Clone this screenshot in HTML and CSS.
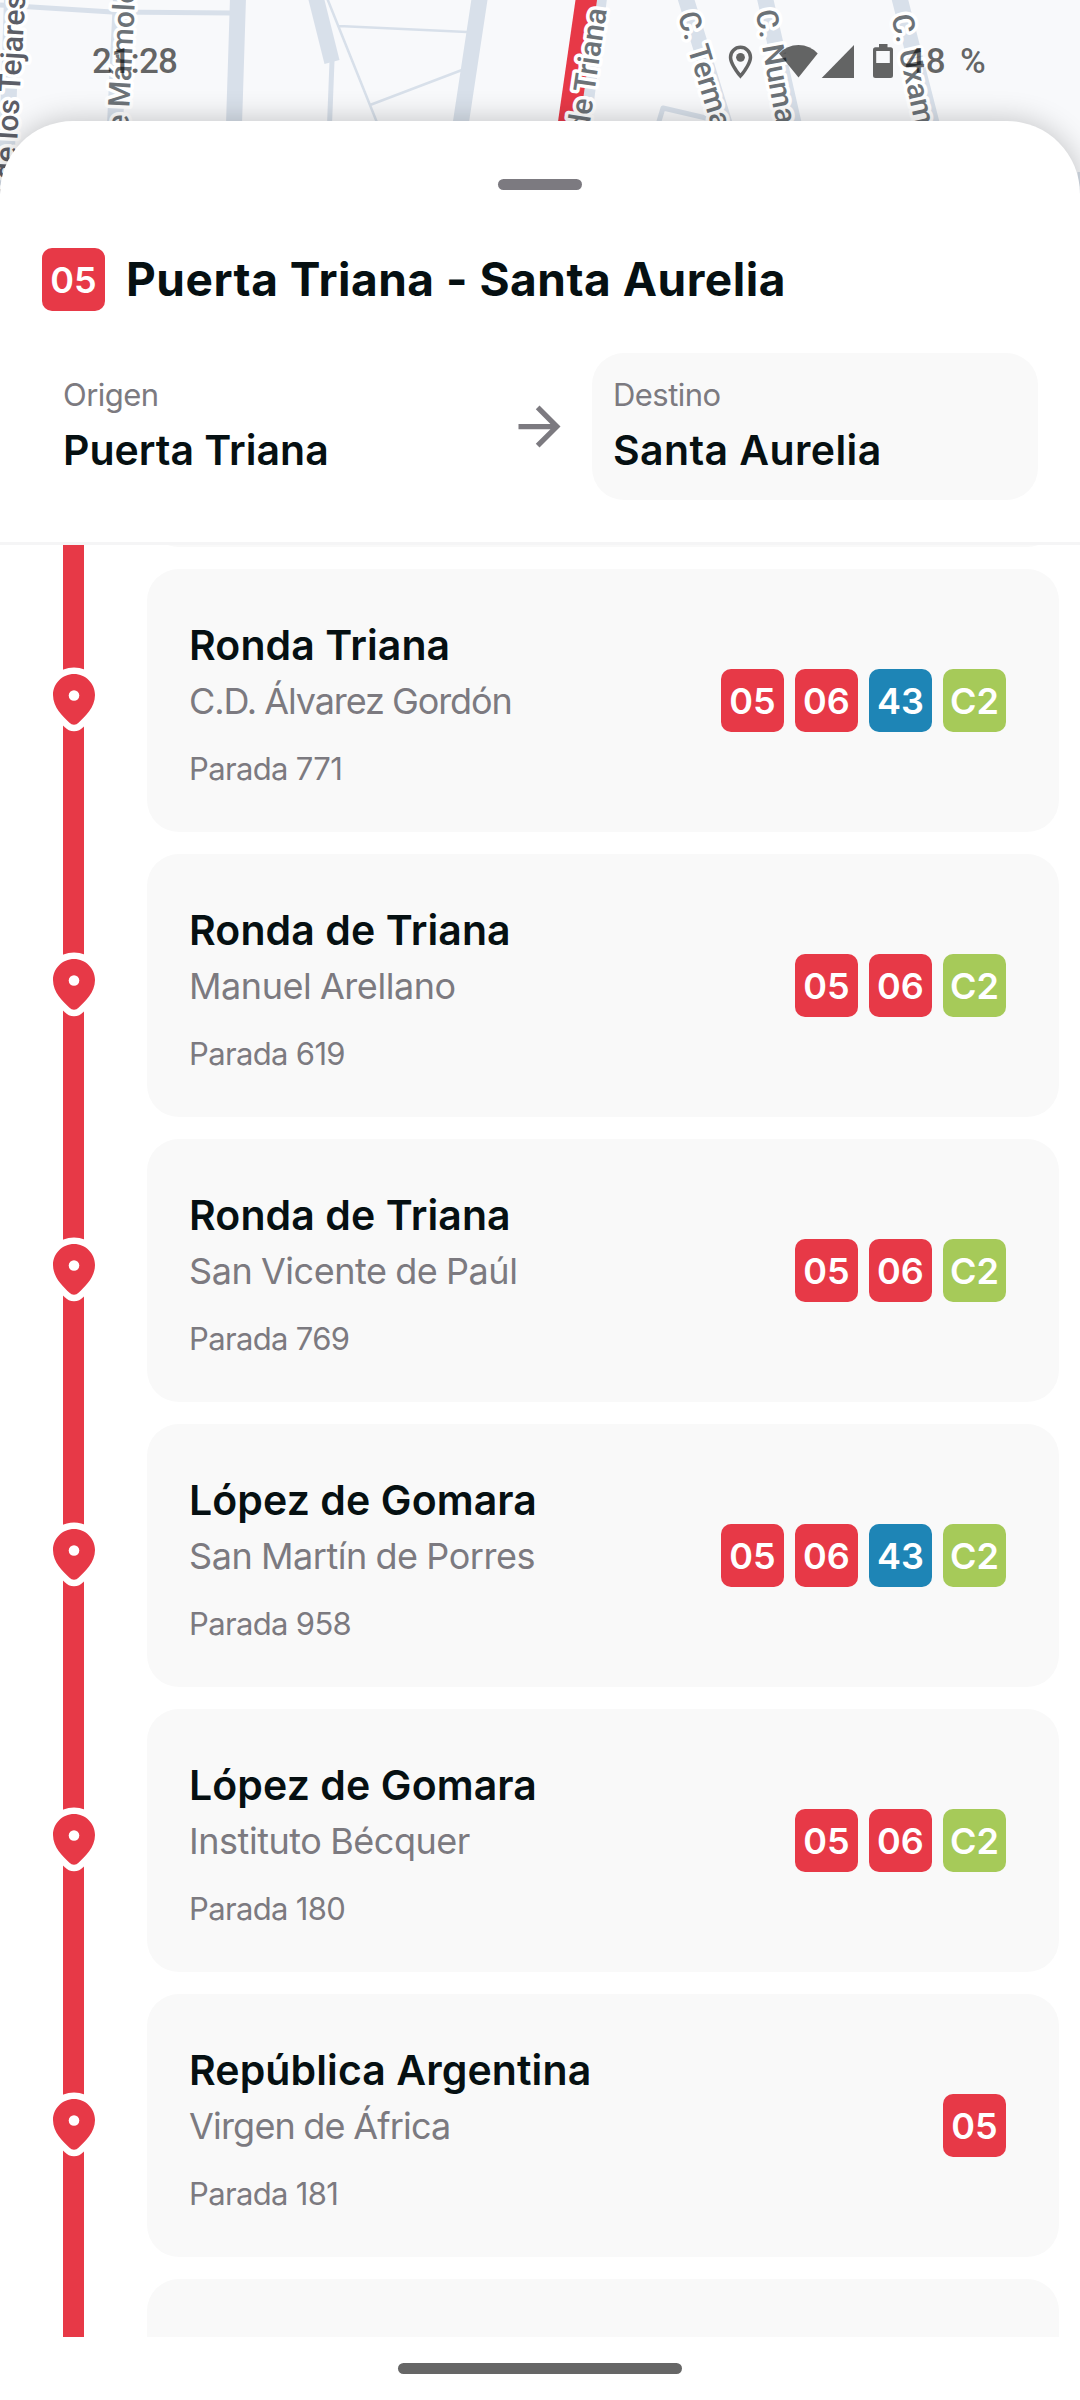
FILE: index.html
```html
<!DOCTYPE html>
<html lang="es">
<head>
<meta charset="utf-8">
<title>Línea 05</title>
<link rel="stylesheet" href="styles.css">
</head>
<body>
<svg width="0" height="0" class="defs">
  <symbol id="pin" viewBox="-30 -30 60 68">
    <path class="pin-halo" d="M0-21C-11.6-21-21-11.6-21 0C-21 12.5-11 21.500-4.500 27.800A6 6 0 0 0 4.500 27.800C11 21.500 21 12.500 21 0C21-11.600 11.600-21 0-21Z"/>
    <path class="pin-body" d="M0-21C-11.6-21-21-11.6-21 0C-21 12.5-11 21.500-4.500 27.800A6 6 0 0 0 4.500 27.800C11 21.500 21 12.500 21 0C21-11.600 11.600-21 0-21Z"/>
    <circle class="pin-dot" cx="0" cy="0.500" r="5.300"/>
  </symbol>
</svg>
<div class="screen">
  <svg class="map" viewBox="0 0 1080 210" width="1080" height="210">
    <g class="roads">
      <path stroke-width="5" d="M0 5L112 12L232 13"/>
      <path stroke-width="16" d="M238 -2L234 125"/>
      <path stroke-width="16" d="M121 -2L115 125M12 -2L5 210M479.700 -2L460.500 125M599 -2L583 125"/>
      <path stroke-width="16" d="M685 -4L725 125M764.500 -4L794 125M899 -4L932 125"/>
      <path stroke-width="15.500" d="M316 -2L332 62"/>
      <path stroke-width="5" d="M332 61L329.500 125"/>
      <path stroke-width="2.500" d="M327 -2L378 125M339 26L467 32M370 105L462 70"/>
      <path stroke-width="5" stroke-linejoin="round" d="M658.500 123L663 108L706 118"/>
      <path stroke-width="5" d="M1080 172V210"/>
    </g>
    <path class="route" d="M575.500 0H597L579.500 125H557.500Z"/>
    <g class="streets">
      <text class="dark" text-anchor="end" transform="translate(25.500 -5.500) rotate(-86.700)">Calle de los Tejares</text>
      <text transform="translate(127.200 148) rotate(-87)">de Mármoles</text>
      <text transform="translate(588.400 132.500) rotate(-81.500)">de Triana</text>
      <text transform="translate(677.400 15) rotate(73)">C. Termancia</text>
      <text transform="translate(755.500 11.500) rotate(79.500)">C. Numancia</text>
      <text transform="translate(891.200 16.600) rotate(77.500)">C. Uxama</text>
    </g>
  </svg>

  <div class="status">
    <span class="clock">21:28</span>
    <svg class="status-icons" viewBox="725 40 172 42" width="172" height="42">
      <path fill-rule="evenodd" d="M740.500 45.500A11.700 11.700 0 0 0 728.800 57.200C728.800 66 740.500 78.500 740.500 78.500S752.200 66 752.200 57.200A11.700 11.700 0 0 0 740.500 45.500ZM740.500 49A8.200 8.200 0 0 1 748.700 57.200C748.700 62 743.500 69.500 740.500 73.300C737.500 69.500 732.300 62 732.300 57.200A8.200 8.200 0 0 1 740.500 49Z"/>
      <circle cx="740.500" cy="57.300" r="4.400"/>
      <path d="M798.500 77.500L779 53.500Q787 45 798.500 45T817.700 53.500Z"/>
      <path d="M821.700 78L854 45V78Z"/>
      <path fill-rule="evenodd" d="M879 44H887.500V47.300H890.500Q893 47.300 893 50V75.500Q893 78 890.500 78H875.500Q873 78 873 75.500V50Q873 47.300 875.500 47.300H879ZM876.200 51V63H889.800V51Z"/>
    </svg>
    <span class="battery">48 %</span>
  </div>

  <main class="sheet">
    <div class="handle"></div>
    <header class="head">
      <div class="line-name"><span class="badge red">05</span><h1>Puerta Triana - Santa Aurelia</h1></div>
      <div class="directions">
        <div class="direction"><span class="label">Origen</span><span class="name">Puerta Triana</span></div>
        <svg class="arrow" viewBox="0 0 24 24" width="63" height="63"><path d="M12 4l-1.410 1.410L16.170 11H4v2h12.170l-5.580 5.590L12 20l8-8z"/></svg>
        <div class="direction selected"><span class="label">Destino</span><span class="name">Santa Aurelia</span></div>
      </div>
    </header>
    <section class="stops">
      <div class="stop previous"><div class="track"></div><article class="card"></article></div>
      <div class="stop">
        <div class="track"><svg class="pin"><use href="#pin"/></svg></div>
        <article class="card"><div class="info"><h2>Ronda Triana</h2><p class="street tighter">C.D. Álvarez Gordón</p><p class="code">Parada 771</p></div>
        <div class="badges"><span class="badge red">05</span><span class="badge red">06</span><span class="badge blue">43</span><span class="badge green">C2</span></div></article>
      </div>
      <div class="stop">
        <div class="track"><svg class="pin"><use href="#pin"/></svg></div>
        <article class="card"><div class="info"><h2>Ronda de Triana</h2><p class="street">Manuel Arellano</p><p class="code">Parada 619</p></div>
        <div class="badges"><span class="badge red">05</span><span class="badge red">06</span><span class="badge green">C2</span></div></article>
      </div>
      <div class="stop">
        <div class="track"><svg class="pin"><use href="#pin"/></svg></div>
        <article class="card"><div class="info"><h2>Ronda de Triana</h2><p class="street">San Vicente de Paúl</p><p class="code">Parada 769</p></div>
        <div class="badges"><span class="badge red">05</span><span class="badge red">06</span><span class="badge green">C2</span></div></article>
      </div>
      <div class="stop">
        <div class="track"><svg class="pin"><use href="#pin"/></svg></div>
        <article class="card"><div class="info"><h2>López de Gomara</h2><p class="street">San Martín de Porres</p><p class="code">Parada 958</p></div>
        <div class="badges"><span class="badge red">05</span><span class="badge red">06</span><span class="badge blue">43</span><span class="badge green">C2</span></div></article>
      </div>
      <div class="stop">
        <div class="track"><svg class="pin"><use href="#pin"/></svg></div>
        <article class="card"><div class="info"><h2>López de Gomara</h2><p class="street">Instituto Bécquer</p><p class="code">Parada 180</p></div>
        <div class="badges"><span class="badge red">05</span><span class="badge red">06</span><span class="badge green">C2</span></div></article>
      </div>
      <div class="stop">
        <div class="track"><svg class="pin"><use href="#pin"/></svg></div>
        <article class="card"><div class="info"><h2>República Argentina</h2><p class="street tight">Virgen de África</p><p class="code">Parada 181</p></div>
        <div class="badges"><span class="badge red">05</span></div></article>
      </div>
      <div class="stop"><div class="track"></div><article class="card"></article></div>
    </section>
    <footer class="nav"><div class="home"></div></footer>
  </main>
</div>
</body>
</html>
```
FILE: styles.css
```css
* { box-sizing: border-box; }
body { margin: 0; background: #fff; font-family: Inter, "Liberation Sans", sans-serif; color: #061012; }
h1, h2, p { margin: 0; }
.defs { position: absolute; }
.screen { position: relative; width: 1080px; height: 2400px; overflow: hidden; display: flex; flex-direction: column; background: #f8f9fb; }

.map { position: absolute; top: 0; left: 0; }
.roads path { fill: none; stroke: #d8e0ea; }
.route { fill: #e73947; }
.streets text { font: 500 30px Roboto, sans-serif; fill: #6c7277; stroke: #fff; stroke-width: 7px; stroke-linejoin: round; paint-order: stroke; }
.streets .dark { fill: #5c5e67; }

.status { position: relative; z-index: 2; flex: none; height: 121px; padding: 40px 0 0 92px; display: flex; align-items: flex-start; font: 500 35px/42px Roboto, sans-serif; color: rgba(0, 0, 0, .6); }
.status-icons { flex: none; fill: rgba(0, 0, 0, .6); }
.clock { flex: none; width: 633px; letter-spacing: -.7px; }
.battery { margin-left: 8px; letter-spacing: .8px; word-spacing: 4px; }
.clock, .battery { padding-top: 1px; white-space: nowrap; }

.sheet { position: relative; flex: 1; min-height: 0; display: flex; flex-direction: column; background: #fff; border-radius: 73px 73px 0 0; box-shadow: 0 0 30px rgba(0, 0, 0, .23); }
.handle { flex: none; align-self: center; width: 84px; height: 11px; margin-top: 58px; border-radius: 6px; background: #7c7a80; }
.head { flex: none; height: 355px; padding: 58px 42px 0; border-bottom: 3px solid #f5f5f6; }
.line-name { display: flex; align-items: center; gap: 21px; height: 63px; }
h1 { font-size: 46px; font-weight: 700; line-height: 60px; letter-spacing: .52px; white-space: nowrap; margin-top: -2px; }
.directions { display: flex; align-items: center; gap: 21px; margin-top: 42px; }
.direction { flex: 1; height: 147px; padding: 21px; border-radius: 32px; display: flex; flex-direction: column; }
.selected { background: #f9f9f9; }
.label { font-size: 31px; line-height: 42px; letter-spacing: -.55px; color: #7c7a80; }
.name { margin-top: 7px; font-size: 41px; font-weight: 600; line-height: 55px; }
.selected .name { letter-spacing: .4px; }
.arrow { margin-left: -1px; fill: #7c7a80; }

.badge { flex: none; width: 63px; height: 63px; border-radius: 10px; color: #fff; font-size: 36px; font-weight: 600; line-height: 64px; text-align: center; }
.red { background: #e73947; }
.blue { background: #1e85b6; }
.green { background: #a6ca59; }

.stops { height: 1792px; flex: none; overflow: hidden; }
.stop { height: 285px; display: flex; align-items: center; padding-right: 21px; }
.previous { margin-top: -272px; }
.track { width: 147px; height: 285px; flex: none; display: flex; align-items: center; background: linear-gradient(#e73947, #e73947) 63px 0 / 21px 100% no-repeat; }
.pin { width: 60px; height: 68px; margin: -3px 0 0 43.500px; }
.pin-halo { fill: #fff; stroke: #fff; stroke-width: 13px; }
.pin-body { fill: #e73947; }
.pin-dot { fill: #fff; }
.card { flex: 1; height: 263px; padding: 0 53px 0 42px; border-radius: 32px; background: #f9f9f9; display: flex; align-items: center; justify-content: space-between; }
.info { display: flex; flex-direction: column; padding-top: 6px; white-space: nowrap; }
h2 { font-size: 41px; font-weight: 600; line-height: 55px; letter-spacing: .1px; }
.street { font-size: 36px; line-height: 48px; color: #7c7a80; margin-top: 4px; letter-spacing: -.45px; word-spacing: -1px; }
.street.tight { letter-spacing: -.8px; }
.street.tighter { letter-spacing: -1.080px; }
.code { font-size: 31px; line-height: 42px; letter-spacing: -.65px; color: #7c7a80; margin-top: 23px; }
.badges { display: flex; gap: 11px; }

.nav { flex: 1; display: flex; justify-content: center; padding-top: 26px; }
.home { width: 284px; height: 10.500px; border-radius: 6px; background: #666; }
```
